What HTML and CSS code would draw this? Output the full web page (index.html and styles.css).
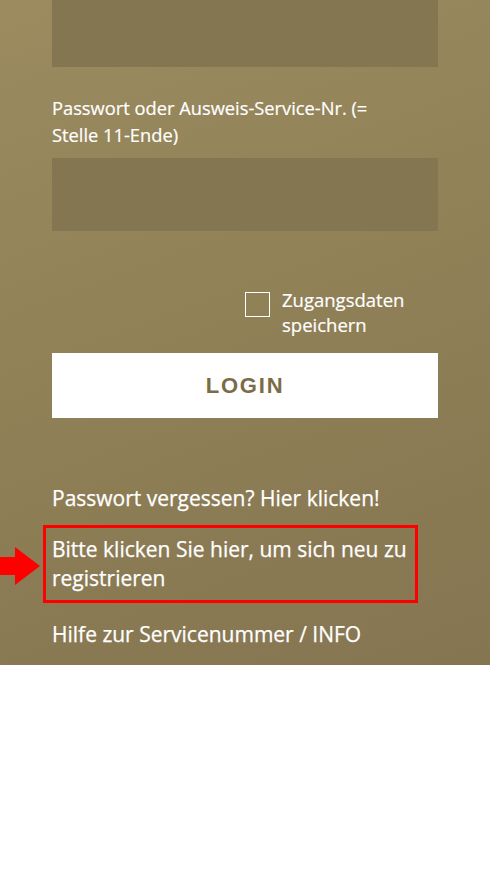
FILE: index.html
```html
<!DOCTYPE html>
<html lang="de">
<head>
<meta charset="utf-8">
<link rel="stylesheet" href="styles.css">
</head>
<body>
<div class="panel">
  <div class="field"></div>
  <label class="label">Passwort oder Ausweis-Service-Nr. (=<br>Stelle 11-Ende)</label>
  <div class="field field-tall"></div>
  <div class="remember">
    <span class="box"></span>
    <span class="remember-text">Zugangsdaten<br>speichern</span>
  </div>
  <button class="login">LOGIN</button>
  <div class="links">
    <a class="link">Passwort vergessen? Hier klicken!</a>
    <div class="highlight">
      <svg class="arrow" width="42" height="40" viewBox="0 0 42 40"><polygon points="0,10 15,10 15,0 40,19 15,38 15,28 0,28" fill="#f00"/></svg>
      <a class="link">Bitte klicken Sie hier, um sich neu zu<br>registrieren</a>
    </div>
    <a class="link">Hilfe zur Servicenummer / INFO</a>
  </div>
</div>
</body>
</html>
```

FILE: styles.css
```css
html, body {
  margin: 0;
  padding: 0;
  background: #fff;
}
body {
  font-family: "Open Sans", "DejaVu Sans", sans-serif;
  width: 490px;
}
.panel {
  height: 665px;
  box-sizing: border-box;
  padding: 0 52px;
  background: linear-gradient(160deg, #9b8b5f 0%, #918157 45%, #857551 100%);
  display: flex;
  flex-direction: column;
  position: relative;
}
.field {
  height: 67px;
  background: #847650;
}
.field-tall {
  height: 73px;
}
.label {
  display: block;
  color: #fff;
  font-size: 18.3px;
  line-height: 27px;
  margin: 27px 0 10px;
  -webkit-text-stroke: 0.2px #fff;
}
.remember {
  display: flex;
  align-items: flex-start;
  margin: 56px 0 0 193px;
}
.box {
  width: 23px;
  height: 23px;
  border: 1.5px solid #fff;
  margin-top: 5px;
  flex: none;
}
.remember-text {
  color: #fff;
  font-size: 18.5px;
  line-height: 25px;
  margin-left: 12px;
  -webkit-text-stroke: 0.2px #fff;
}
.login {
  margin-top: 16px;
  height: 65px;
  border: none;
  background: #fff;
  color: #7b6b46;
  font-family: "Liberation Sans", Arial, sans-serif;
  font-weight: bold;
  font-size: 22px;
  letter-spacing: 1.8px;
  padding: 0;
}
.links {
  display: flex;
  flex-direction: column;
  margin-top: 66px;
}
.link {
  color: #fff;
  font-size: 21px;
  line-height: 29px;
  white-space: nowrap;
  -webkit-text-stroke: 0.25px #fff;
}
.highlight {
  position: relative;
  margin: 12px 20px 0 -9px;
  border: 3px solid #f00;
  padding: 7px 0 7px 6px;
}
.arrow {
  position: absolute;
  left: -46px;
  top: 19px;
}
.highlight + .link {
  margin-top: 17px;
}
```
